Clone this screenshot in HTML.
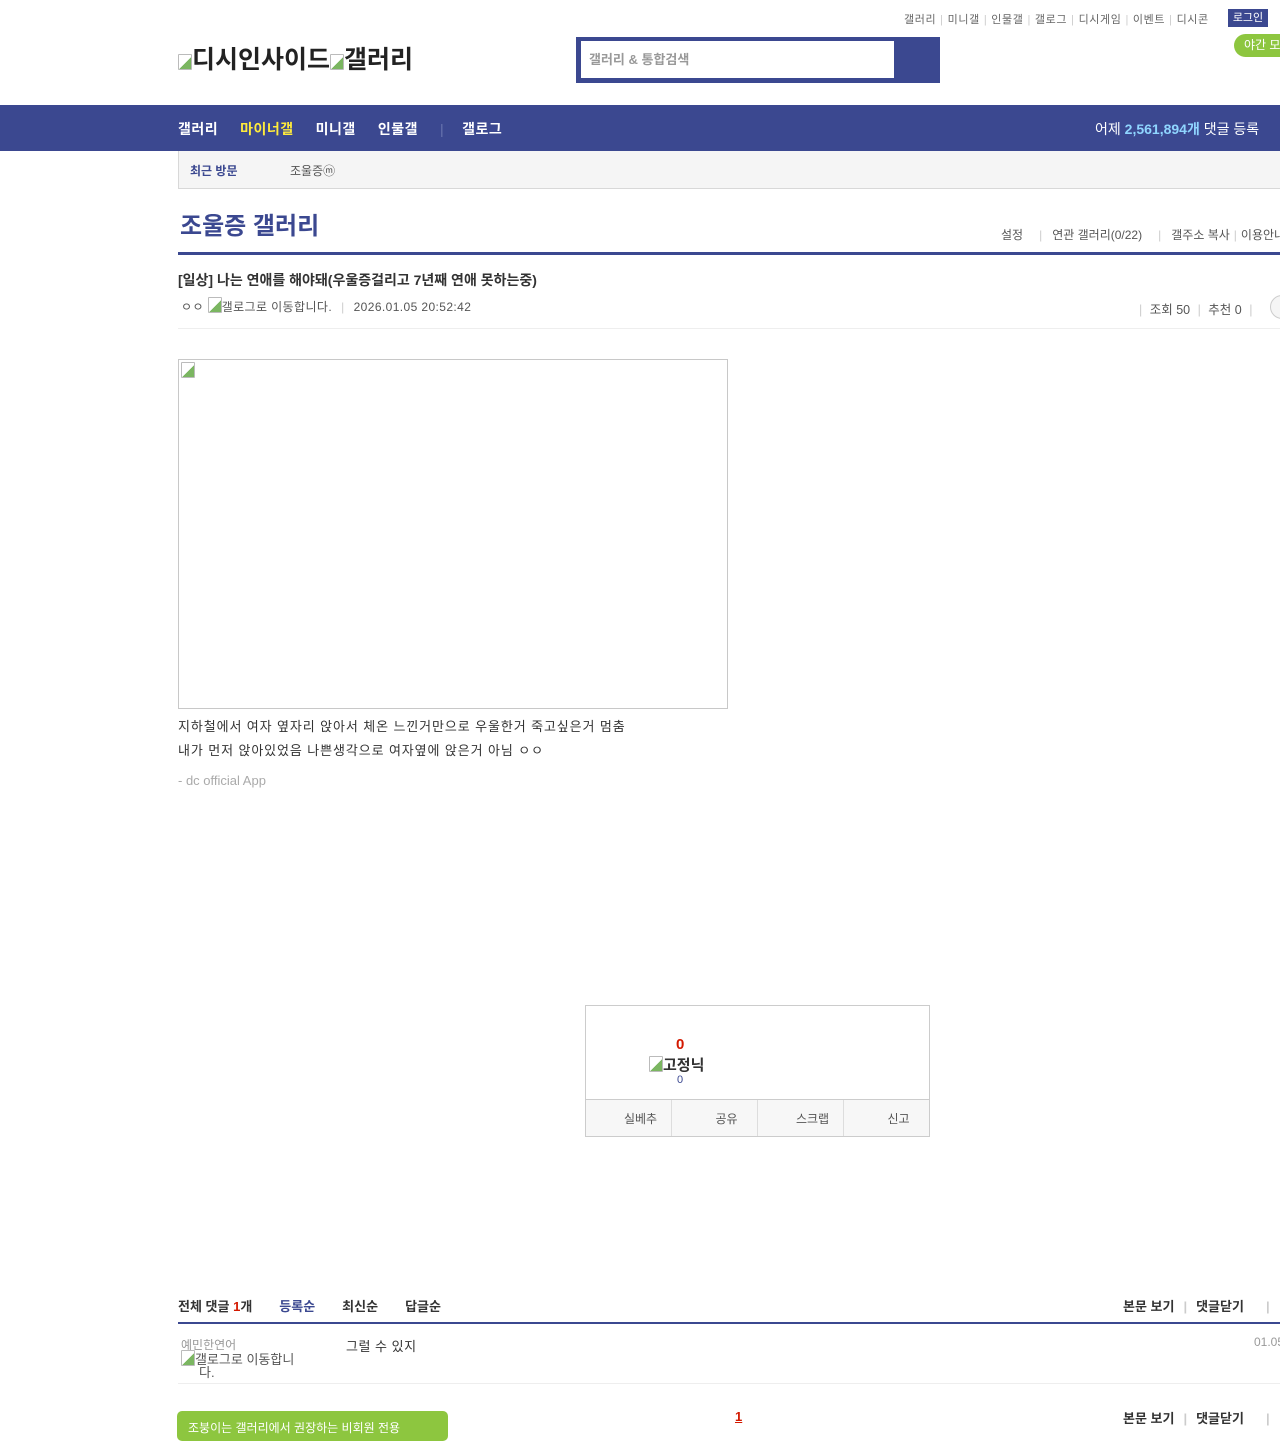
<!DOCTYPE html>
<html><head><meta charset="utf-8"><style>
*{margin:0;padding:0;box-sizing:border-box}
body{width:1280px;height:1429px;overflow:hidden;background:#fff;font-family:"Liberation Sans","Noto Sans CJK KR",sans-serif;color:#333;position:relative;font-size:12px}
.a{position:absolute;white-space:nowrap}
.sep{color:#ccc;margin:0 4px}
.bi{display:inline-block;width:14px;height:16px;border:1px solid #bbb;border-radius:1px;vertical-align:-2px;background:linear-gradient(135deg,#fff 55%,#7bb661 55%)}
.bt{flex:1;border-right:1px solid #ddd;text-align:center;line-height:38px;color:#555;padding-left:24px}
</style></head><body>
<div class="a" style="top:11px;left:904px;font-size:11px;color:#666;letter-spacing:0.6px">갤러리<span class="sep">|</span>미니갤<span class="sep">|</span>인물갤<span class="sep">|</span>갤로그<span class="sep">|</span>디시게임<span class="sep">|</span>이벤트<span class="sep">|</span>디시콘</div>
<div class="a" style="top:9px;left:1228px;width:40px;height:18px;background:#3b4890;color:#fff;font-size:11px;text-align:center;line-height:18px">로그인</div>
<div class="a" style="top:34px;left:1234px;width:60px;height:23px;background:#8dc63f;border-radius:12px;color:#fff;font-size:12px;line-height:23px;padding-left:10px">야간 모드</div>
<div class="a" style="top:40px;left:178px;font-size:25px;font-weight:bold;color:#222"><span class="bi"></span>디시인사이드<span class="bi"></span>갤러리</div>
<div class="a" style="top:37px;left:576px;width:364px;height:46px;background:#3b4890"><div style="position:absolute;left:5px;top:4px;width:313px;height:37px;background:#fff;font-size:13px;font-weight:bold;color:#999;line-height:37px;padding-left:8px">갤러리 &amp; 통합검색</div></div>
<div class="a" style="top:105px;left:0;width:1280px;height:46px;background:#3b4890"></div>
<div class="a" style="top:119px;left:178px;font-size:14px;font-weight:bold;color:#fff;letter-spacing:0.5px">갤러리<span style="color:#ffeb3b;margin-left:22px">마이너갤</span><span style="margin-left:22px">미니갤</span><span style="margin-left:22px">인물갤</span><span style="color:#6a75b0;margin:0 18px 0 22px;font-weight:normal">|</span>갤로그</div>
<div class="a" style="top:119px;left:1095px;font-size:14px;color:#fff">어제 <b style="color:#8fd5ff">2,561,894개</b> 댓글 등록</div>
<div class="a" style="top:151px;left:178px;width:1110px;height:38px;background:#f5f5f5;border:1px solid #d8d8d8;border-top:none"></div>
<div class="a" style="top:162px;left:190px;font-size:12px;font-weight:bold;color:#3b4890">최근 방문</div>
<div class="a" style="top:162px;left:290px;font-size:12px;color:#555">조울증ⓜ</div>
<div class="a" style="top:206px;left:180px;font-size:24px;font-weight:bold;color:#3b4890">조울증 갤러리</div>
<div class="a" style="top:226px;left:1001px;font-size:12px;color:#555">설정<span class="sep" style="margin:0 10px 0 16px">|</span>연관 갤러리(0/22)<span class="sep" style="margin:0 10px 0 16px">|</span>갤주소 복사<span class="sep">|</span>이용안내</div>
<div class="a" style="top:252px;left:178px;width:1110px;height:3px;background:#3b4890"></div>
<div class="a" style="top:270px;left:178px;font-size:14px;font-weight:bold;color:#333">[일상] 나는 연애를 해야돼(우울증걸리고 7년째 연애 못하는중)</div>
<div class="a" style="top:297px;left:181px;font-size:12px;color:#555;letter-spacing:0.4px">ㅇㅇ <span class="bi"></span>갤로그로 이동합니다.<span class="sep" style="margin:0 9px">|</span>2026.01.05 20:52:42</div>
<div class="a" style="top:299px;left:1135px;font-size:12.5px;color:#555"><span class="sep">|</span> 조회 50 <span class="sep">|</span> 추천 0 <span class="sep">|</span></div>
<div class="a" style="top:295px;left:1270px;width:30px;height:24px;border:1px solid #ccc;border-radius:12px;background:#f5f5f5"></div>
<div class="a" style="top:328px;left:178px;width:1110px;height:1px;background:#eee"></div>
<div class="a" style="top:359px;left:178px;width:550px;height:350px;border:1px solid #c8c8c8"><span class="bi" style="position:absolute;left:2px;top:2px"></span></div>
<div class="a" style="top:715px;left:178px;font-size:13px;color:#333;line-height:24px;letter-spacing:0.9px">지하철에서 여자 옆자리 앉아서 체온 느낀거만으로 우울한거 죽고싶은거 멈춤<br>내가 먼저 앉아있었음 나쁜생각으로 여자옆에 앉은거 아님 ㅇㅇ</div>
<div class="a" style="top:773px;left:178px;font-size:13px;color:#aaa">- dc official App</div>
<div class="a" style="top:1005px;left:585px;width:345px;height:132px;border:1px solid #ccc"></div>
<div class="a" style="top:1036px;left:676px;font-size:15px;font-weight:bold;color:#d31900">0</div>
<div class="a" style="top:1054px;left:649px;font-size:15px;font-weight:bold;color:#333"><span class="bi"></span>고정닉</div>
<div class="a" style="top:1074px;left:677px;font-size:11px;color:#3b4890">0</div>
<div class="a" style="top:1099px;left:586px;width:343px;height:37px;background:#f7f7f7;border-top:1px solid #ccc;display:flex">
<div class="bt">실베추</div><div class="bt">공유</div><div class="bt">스크랩</div><div class="bt" style="border-right:none">신고</div></div>
<div class="a" style="top:1296px;left:178px;font-size:13px;font-weight:bold;color:#333">전체 댓글 <span style="color:#d31900">1</span>개<span style="color:#3b4890;margin-left:27px">등록순</span><span style="margin-left:27px">최신순</span><span style="margin-left:27px">답글순</span></div>
<div class="a" style="top:1296px;left:1123px;font-size:13px;font-weight:bold;color:#333">본문 보기<span class="sep" style="margin:0 9px">|</span>댓글닫기<span class="sep" style="margin-left:22px">|</span></div>
<div class="a" style="top:1322px;left:178px;width:1110px;height:2px;background:#3b4890"></div>
<div class="a" style="top:1336px;left:181px;font-size:12px;color:#999">예민한연어</div>
<div class="a" style="top:1350px;left:181px;font-size:13px;color:#555;line-height:13px"><span class="bi"></span>갤로그로 이동합니<br>&nbsp;&nbsp;&nbsp;&nbsp;&nbsp;다.</div>
<div class="a" style="top:1336px;left:346px;font-size:13px;color:#333;letter-spacing:0.5px">그럴 수 있지</div>
<div class="a" style="top:1335px;left:1254px;font-size:12px;color:#999">01.05</div>
<div class="a" style="top:1383px;left:178px;width:1110px;height:1px;background:#eee"></div>
<div class="a" style="top:1411px;left:177px;width:271px;height:30px;background:#8dc63f;border-radius:5px;color:#fff;font-size:12px;padding:8px 0 0 11px">조붕이는 갤러리에서 권장하는 비회원 전용</div>
<div class="a" style="top:1409px;left:735px;font-size:13px;font-weight:bold;color:#d31900;text-decoration:underline">1</div>
<div class="a" style="top:1408px;left:1123px;font-size:13px;font-weight:bold;color:#333">본문 보기<span class="sep" style="margin:0 9px">|</span>댓글닫기<span class="sep" style="margin-left:22px">|</span></div>
</body></html>
